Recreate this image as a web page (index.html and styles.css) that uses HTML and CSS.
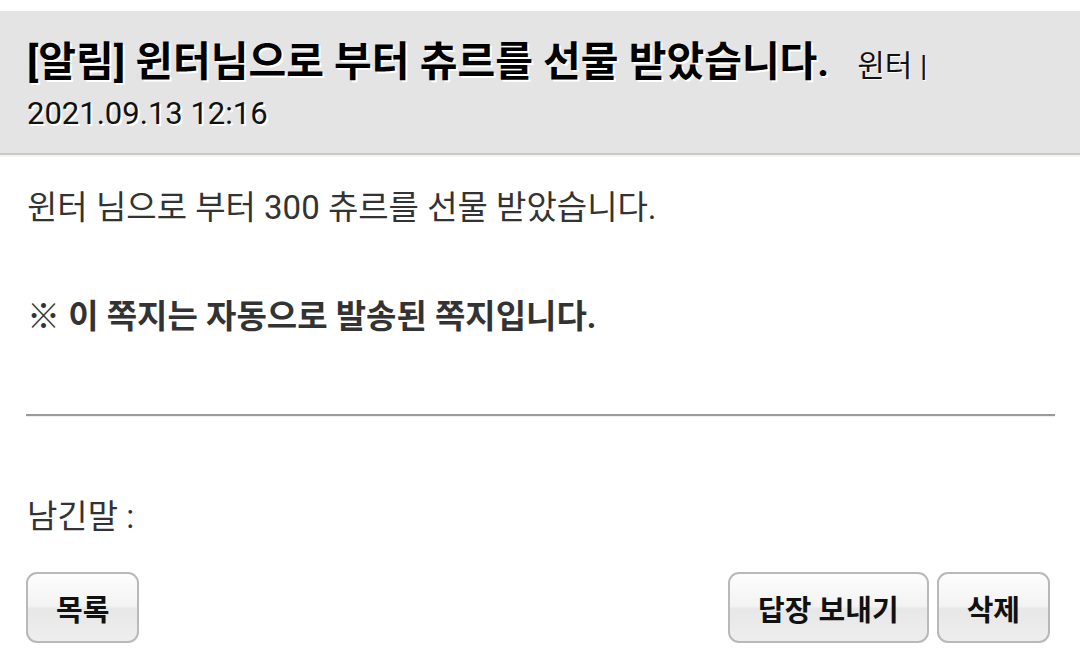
FILE: index.html
```html
<!DOCTYPE html>
<html lang="ko">
<head>
<meta charset="utf-8">
<link rel="stylesheet" href="styles.css">
</head>
<body>
<div class="page">
  <header class="msg-head">
    <div class="title-row"><span class="title">[알림] 윈터님으로 부터 츄르를 선물 받았습니다.</span><span class="sender">윈터 |</span></div>
    <div class="date">2021.09.13 12:16</div>
  </header>
  <main class="content">
    <p class="body-text">윈터 님으로 부터 300 츄르를 선물 받았습니다.</p>
    <p class="note">※ 이 쪽지는 자동으로 발송된 쪽지입니다.</p>
    <hr class="divider">
    <p class="memo">남긴말 :</p>
    <div class="actions">
      <button class="btn">목록</button>
      <div class="right-actions">
        <button class="btn">답장 보내기</button>
        <button class="btn">삭제</button>
      </div>
    </div>
  </main>
</div>
</body>
</html>
```

FILE: styles.css
```css
html, body {
  margin: 0;
  padding: 0;
  background: #ffffff;
}
body {
  font-family: Roboto, "Noto Sans CJK KR", sans-serif;
  color: #333333;
}
.page {
  padding-top: 11px;
}
.msg-head {
  background: #e4e4e4;
  padding: 28px 26px 19px 27px;
  border-bottom: 2px solid #c9cac2;
  box-shadow: 0 2px 0 #f6f6ef;
}
.title-row {
  line-height: 46px;
  white-space: nowrap;
}
.title {
  font-size: 41px;
  font-weight: 700;
  color: #000000;
  text-shadow: 2px 2px 0 #ffffff;
}
.sender {
  font-size: 30px;
  color: #111111;
  margin-left: 28px;
  text-shadow: 1px 1px 0 #ffffff;
}
.date {
  font-size: 31px;
  line-height: 40px;
  color: #111111;
  text-shadow: 2px 2px 0 #ffffff;
}
.content {
  padding: 0 25px 0 26px;
}
.body-text {
  margin: 33px 0 0 1px;
  font-size: 33px;
  line-height: 40px;
}
.note {
  margin: 69px 0 0 1px;
  font-size: 33px;
  line-height: 40px;
  font-weight: 700;
}
.divider {
  margin: 77px 0 0 0;
  border: 0;
  border-top: 2px solid #9a9a9a;
  border-bottom: 1px solid #eeeeee;
  height: 0;
}
.memo {
  margin: 80px 0 0 1px;
  font-size: 33px;
  line-height: 40px;
}
.actions {
  margin-top: 35px;
  display: flex;
  justify-content: space-between;
  padding-right: 5px;
}
.right-actions {
  display: flex;
  gap: 8px;
}
.btn {
  font-family: Roboto, "Noto Sans CJK KR", sans-serif;
  font-size: 29px;
  font-weight: 700;
  color: #111111;
  height: 71px;
  padding: 0 28px;
  border: 2px solid #b9b9b9;
  border-radius: 11px;
  background: linear-gradient(to bottom, #fdfdfd 0%, #f3f3f3 48%, #e7e7e7 52%, #eeeeee 100%);
}
```
